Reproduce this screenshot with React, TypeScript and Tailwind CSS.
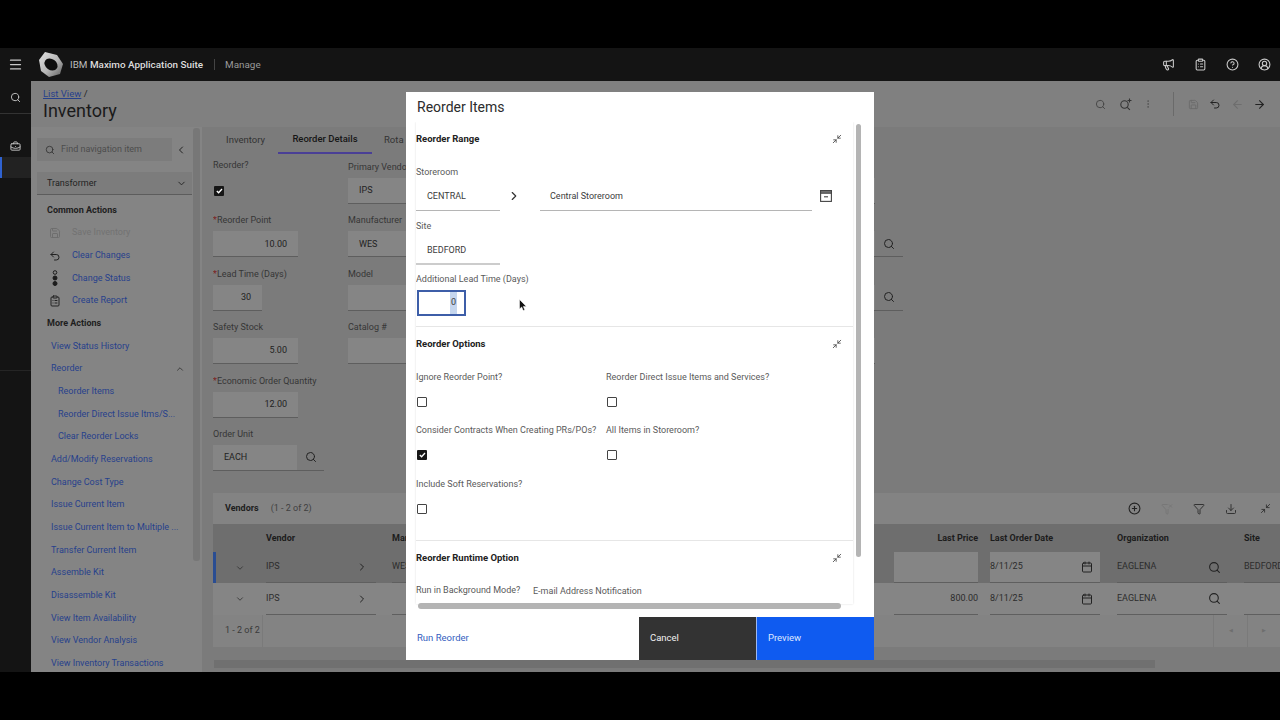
import { ArrowLeft, ArrowRight, BriefcaseBusiness, Calendar, ChevronDown, ChevronLeft, ChevronRight, ChevronUp, CircleHelp, CirclePlus, CircleUserRound, ClipboardList, Download, EllipsisVertical, Filter, FilterX, Megaphone, Menu, Minimize2, Save, Search, Undo2 } from "lucide-react";
import type { ReactNode } from "react";

const moreActions = [
  { t: "View Status History", sub: false },
  { t: "Reorder", sub: false, open: true },
  { t: "Reorder Items", sub: true },
  { t: "Reorder Direct Issue Itms/S...", sub: true },
  { t: "Clear Reorder Locks", sub: true },
  { t: "Add/Modify Reservations", sub: false },
  { t: "Change Cost Type", sub: false },
  { t: "Issue Current Item", sub: false },
  { t: "Issue Current Item to Multiple ...", sub: false },
  { t: "Transfer Current Item", sub: false },
  { t: "Assemble Kit", sub: false },
  { t: "Disassemble Kit", sub: false },
  { t: "View Item Availability", sub: false },
  { t: "View Vendor Analysis", sub: false },
  { t: "View Inventory Transactions", sub: false },
];

function Logo() {
  return (
    <svg width="26" height="27" viewBox="0 0 26 27">
      <defs>
        <linearGradient id="nut" x1="0" y1="0" x2="1" y2="1">
          <stop offset="0" stopColor="#e2e2e2" />
          <stop offset="0.55" stopColor="#b5b5b5" />
          <stop offset="1" stopColor="#5a5a5a" />
        </linearGradient>
      </defs>
      <polygon points="7,1 19,4 25,13 22,23 11,26 3,20 1,9" fill="url(#nut)" />
      <ellipse cx="13" cy="13.5" rx="7" ry="5.5" transform="rotate(35 13 13.5)" fill="#0e0e0e" />
    </svg>
  );
}

function StatusIcon() {
  return (
    <svg width="12" height="16" viewBox="0 0 12 16" fill="none" stroke="#1c1c1c" strokeWidth="1">
      <circle cx="6" cy="2.5" r="1.8" />
      <circle cx="6" cy="8" r="2" fill="#1c1c1c" />
      <circle cx="6" cy="13.5" r="2" fill="#1c1c1c" />
    </svg>
  );
}

function StoreIcon() {
  return (
    <svg width="12" height="12" viewBox="0 0 12 12" fill="none" stroke="#444" strokeWidth="1.1">
      <rect x="0.6" y="0.6" width="10.8" height="10.8" />
      <rect x="0.6" y="0.6" width="10.8" height="2.6" fill="#777" />
      <path d="M4 6.8h4" />
    </svg>
  );
}

function ZoomPlus() {
  return (
    <svg width="14" height="14" viewBox="0 0 14 14" fill="none" stroke="#333" strokeWidth="1.1">
      <circle cx="5.5" cy="7.5" r="3.7" />
      <path d="M8.3 10.3l2.6 2.6M10.5 1.5v4M8.5 3.5h4" />
    </svg>
  );
}

function Check({ on }: { on?: boolean }) {
  return (
    <div className={on ? "w-[10px] h-[10px] rounded-[1px] bg-[#161616] flex items-center justify-center" : "w-[10px] h-[10px] rounded-[1px] border border-[#444444]"}>
      {on && (
        <svg width="7" height="6" viewBox="0 0 7 6" fill="none" stroke="#fff" strokeWidth="1.3">
          <path d="M0.8 3l1.8 1.8L6 1" />
        </svg>
      )}
    </div>
  );
}

function Field({ label, req, width, right, children }: { label: string; req?: boolean; width: string; right?: boolean; children?: ReactNode }) {
  return (
    <div className="h-[53.4px] flex flex-col">
      <div className="h-[13px] text-[9px] leading-[13px] text-[#363636] whitespace-nowrap">
        {req && <span className="text-[#7c1f1f]">*</span>}
        {label}
      </div>
      <div className={`${width} h-[26px] mt-[4px] pt-[1px] bg-[#858585] border-b border-[#5e5e5e] text-[9px] text-[#222222] flex items-center ${right ? "justify-end pr-[11px]" : "pl-[11px]"}`}>
        {children}
      </div>
    </div>
  );
}

function LookupField({ label }: { label: string }) {
  return (
    <div className="h-[53.4px] flex flex-col">
      <div className="h-[13px] text-[9px] leading-[13px] text-[#363636] whitespace-nowrap">{label}</div>
      <div className="w-[555px] h-[26px] mt-[4px] flex border-b border-[#5e5e5e] text-[9px] text-[#222222]">
        <div className="w-[527px] pt-[1px] bg-[#858585] flex items-center pl-[11px]">{label === "Manufacturer" ? "WES" : ""}</div>
        <div className="flex-1 flex items-center justify-center">
          <Search size={12} color="#222" />
        </div>
      </div>
    </div>
  );
}

function ModalLabel({ children }: { children: ReactNode }) {
  return <div className="text-[9px] leading-[13px] text-[#5a5a5a] whitespace-nowrap">{children}</div>;
}

function SectionHead({ title }: { title: string }) {
  return (
    <div className="flex items-center justify-between pr-[11px]">
      <span className="text-[9.5px] leading-[13px] font-bold text-[#222222]">{title}</span>
      <Minimize2 size={10} color="#444" />
    </div>
  );
}

function OptionCell({ label, on }: { label: string; on?: boolean }) {
  return (
    <div className="h-[53.4px]">
      <ModalLabel>{label}</ModalLabel>
      <div className="pl-[1px] mt-[13px]">
        <Check on={on} />
      </div>
    </div>
  );
}

function VendorRow({ dark, blue, price, org }: { dark?: boolean; blue?: boolean; price?: string; org: string }) {
  const line = "border-b border-[#5f5f5f]";
  return (
    <div className={`relative ${dark ? "h-[31px] bg-[#6e6e6e]" : "h-[32px] bg-[#858585]"} grid grid-cols-[53px_126px_502px_96px_127px_127px_60px] items-stretch text-[9px] text-[#2c2c2c]`}>
      {blue && <div className="absolute left-0 top-0 bottom-0 w-[3px] bg-[#2a4d92]" />}
      <div className="flex items-center justify-center">
        <ChevronDown size={10} color="#333" />
      </div>
      <div className={`flex items-center justify-between pr-[8px] mr-[16px] ${line}`}>
        <span>IPS</span>
        <ChevronRight size={12} color="#222" />
      </div>
      <div className="pr-[10px] flex">
        <div className={`w-[100px] flex items-center ${line}`}>{dark ? "WES" : ""}</div>
      </div>
      <div className="pr-[12px]">
        <div className={`h-full bg-[#858585] flex items-center justify-end ${line}`}>{price}</div>
      </div>
      <div className={`mr-[17px] bg-[#858585] flex items-center justify-between pr-[7px] ${line}`}>
        <span>8/11/25</span>
        <Calendar size={12} color="#222" />
      </div>
      <div className={`mr-[17px] flex items-center justify-between pr-[6px] ${line}`}>
        <span>{org}</span>
        <Search size={13} color="#222" />
      </div>
      <div className={`flex items-center whitespace-nowrap ${line}`}>{dark ? "BEDFORD" : ""}</div>
    </div>
  );
}

export default function App() {
  return (
    <div className="relative w-[1280px] h-[720px] overflow-hidden bg-black flex flex-col font-['Roboto',sans-serif]">
      <div className="h-[48px]" />

      <header className="h-[33px] bg-[#141414] flex items-center">
        <div className="w-[31px] flex justify-center">
          <Menu size={15} color="#c8c8c8" />
        </div>
        <div className="ml-[7px]">
          <Logo />
        </div>
        <div className="ml-[6px] pt-[1px] text-[9.9px] text-[#bdbdbd]">
          IBM <span className="font-medium text-[#dddddd]">Maximo Application Suite</span>
        </div>
        <div className="ml-[11px] w-px h-[11px] bg-[#444444]" />
        <div className="ml-[10px] pt-[1px] text-[9.9px] text-[#9a9a9a]">Manage</div>
        <div className="ml-auto flex items-center gap-[19px] pr-[9px]">
          <Megaphone size={13} color="#c8c8c8" />
          <ClipboardList size={13} color="#c8c8c8" />
          <CircleHelp size={13} color="#c8c8c8" />
          <CircleUserRound size={13} color="#c8c8c8" />
        </div>
      </header>

      <div className="h-[591px] flex">
        <aside className="w-[31px] bg-[#141414] flex flex-col">
          <div className="h-[33px] flex items-center justify-center border-b border-[#333333]">
            <Search size={11} color="#c8c8c8" />
          </div>
          <div className="h-[43px] flex items-end justify-center pb-[5px]">
            <BriefcaseBusiness size={11} color="#c8c8c8" />
          </div>
          <div className="h-[21px] bg-[#222222] border-l-2 border-[#2f62d0]" />
          <div className="mt-[192px] border-b border-[#252525]" />
        </aside>

        <div className="flex-1 bg-[#7b7b7b] flex flex-col min-w-0 overflow-hidden">
          <div className="h-[46px] bg-[#808080] flex">
            <div className="pl-[12px] pt-[7px]">
              <div className="text-[9.5px] leading-[12px] text-[#1f1f1f]">
                <span className="text-[#27418c] underline">List View</span> /
              </div>
              <div className="text-[18px] leading-[22px] text-[#1a1a1a]">Inventory</div>
            </div>
            <div className="ml-auto pr-[10px] flex items-center">
              <div className="w-[22px] flex justify-center mr-[4px]">
                <Search size={11} color="#444" />
              </div>
              <div className="w-[22px] flex justify-center">
                <ZoomPlus />
              </div>
              <div className="w-[22px] flex justify-center">
                <EllipsisVertical size={10} color="#555" />
              </div>
              <div className="w-px h-[24px] bg-[#6a6a6a] ml-[14px] mr-[8px]" />
              <div className="w-[22px] flex justify-center">
                <Save size={11} color="#6a6a6a" />
              </div>
              <div className="w-[22px] flex justify-center">
                <Undo2 size={12} color="#222" />
              </div>
              <div className="w-[22px] flex justify-center">
                <ArrowLeft size={13} color="#6e6e6e" />
              </div>
              <div className="w-[22px] flex justify-center">
                <ArrowRight size={13} color="#222" />
              </div>
            </div>
          </div>

          <div className="flex-1 flex min-h-0">
            <nav className="relative w-[171px] bg-[#848484] overflow-hidden shrink-0">
              <div className="absolute left-[162px] top-[1px] w-[7px] h-[433px] rounded-[3px] bg-[#777777]" />
              <div className="flex items-center pl-[6px] pt-[11px]">
                <div className="w-[135px] h-[23px] bg-[#7c7c7c] flex items-center pl-[8px] gap-[6px]">
                  <Search size={10} color="#333" />
                  <span className="pt-[1px] text-[9px] text-[#4d4d4d]">Find navigation item</span>
                </div>
                <ChevronLeft size={12} color="#222" className="ml-[3px]" />
              </div>
              <div className="ml-[6px] mr-[10px] mt-[11px] h-[23px] pt-[1px] bg-[#7c7c7c] border-b border-[#5c5c5c] flex items-center justify-between pl-[10px] pr-[5px] text-[9px] text-[#222222]">
                Transformer
                <ChevronDown size={11} color="#222" />
              </div>
              <div className="pl-[16px] pt-[5px] text-[9px]">
                <div className="h-[21.7px] flex items-center font-bold text-[#1e1e1e]">Common Actions</div>
                <div className="h-[22.68px] flex items-center gap-[11px] pl-[2px] text-[#727272]">
                  <Save size={12} color="#6e6e6e" />
                  Save Inventory
                </div>
                <div className="h-[22.68px] flex items-center gap-[11px] pl-[2px] text-[#27418c]">
                  <Undo2 size={12} color="#222" />
                  Clear Changes
                </div>
                <div className="h-[22.68px] flex items-center gap-[11px] pl-[2px] text-[#27418c]">
                  <StatusIcon />
                  Change Status
                </div>
                <div className="h-[22.68px] flex items-center gap-[11px] pl-[2px] text-[#27418c]">
                  <ClipboardList size={12} color="#222" />
                  Create Report
                </div>
                <div className="h-[22.68px] flex items-center font-bold text-[#1e1e1e]">More Actions</div>
                {moreActions.map((a) => (
                  <div key={a.t} className={a.sub ? "h-[22.68px] flex items-center text-[#27418c] pl-[11px] whitespace-nowrap" : "h-[22.68px] flex items-center justify-between pr-[17px] text-[#27418c] pl-[4px] whitespace-nowrap"}>
                    {a.t}
                    {a.open && <ChevronUp size={10} color="#333" />}
                  </div>
                ))}
              </div>
            </nav>

            <div className="w-[11px] shrink-0" />

            <main className="flex-1 min-w-0 overflow-hidden">
              <div className="h-[27px] flex text-[9.5px] text-[#333333]">
                <div className="w-[65px] flex items-center justify-center">Inventory</div>
                <div className="w-[94px] flex items-center justify-center font-medium text-[#161616] border-b-2 border-[#4a3f96]">Reorder Details</div>
                <div className="w-[34px] ml-[12px] overflow-hidden whitespace-nowrap flex items-center">Rota</div>
              </div>

              <div className="flex pt-[5px] h-[339px]">
                <div className="w-[135px] shrink-0">
                  <div className="h-[55.4px]">
                    <div className="text-[9px] leading-[13px] text-[#363636]">Reorder?</div>
                    <div className="mt-[14px] pl-[1px]">
                      <Check on />
                    </div>
                  </div>
                  <Field label="Reorder Point" req width="w-[85px]" right>10.00</Field>
                  <Field label="Lead Time (Days)" req width="w-[49px]" right>30</Field>
                  <Field label="Safety Stock" width="w-[85px]" right>5.00</Field>
                  <Field label="Economic Order Quantity" req width="w-[85px]" right>12.00</Field>
                  <div className="h-[53.4px] flex flex-col">
                    <div className="h-[13px] text-[9px] leading-[13px] text-[#363636]">Order Unit</div>
                    <div className="flex h-[26px] mt-[4px] border-b border-[#5e5e5e] w-[111px] text-[9px] text-[#222222]">
                      <div className="w-[84px] pt-[1px] bg-[#858585] flex items-center pl-[11px]">EACH</div>
                      <div className="flex-1 flex items-center justify-center">
                        <Search size={12} color="#222" />
                      </div>
                    </div>
                  </div>
                </div>
                <div className="w-[555px] shrink-0">
                  <div className="pt-[2px] h-[55.4px]">
                    <div className="h-[13px] text-[9px] leading-[13px] text-[#363636] whitespace-nowrap">Primary Vendor</div>
                    <div className="w-[527px] h-[26px] mt-[4px] pt-[1px] bg-[#858585] border-b border-[#5e5e5e] text-[9px] text-[#222222] flex items-center pl-[11px]">IPS</div>
                  </div>
                  <LookupField label="Manufacturer" />
                  <LookupField label="Model" />
                  <Field label="Catalog #" width="w-[527px]" />
                </div>
              </div>
            </main>
          </div>
        </div>
      </div>

      <div className="absolute left-[213px] right-0 top-[493px] h-[154px] bg-[#838383]">
        <div className="h-[31px] flex items-center pl-[12px] text-[9px] text-[#1e1e1e]">
          <span className="font-bold">Vendors</span>
          <span className="ml-[12px] text-[#3f3f3f]">(1 - 2 of 2)</span>
          <div className="ml-auto flex items-center gap-[20px] pr-[9px]">
            <CirclePlus size={13} color="#222" />
            <FilterX size={12} color="#777" />
            <Filter size={12} color="#333" />
            <Download size={12} color="#333" />
            <Minimize2 size={11} color="#333" className="ml-[3px]" />
          </div>
        </div>
        <div className="h-[28px] pt-[1px] bg-[#6e6e6e] grid grid-cols-[53px_126px_502px_96px_127px_127px_60px] items-center text-[9px] font-bold text-[#1c1c1c]">
          <div />
          <div>Vendor</div>
          <div>Manufacturer</div>
          <div className="text-right pr-[12px]">Last Price</div>
          <div>Last Order Date</div>
          <div>Organization</div>
          <div>Site</div>
        </div>
        <VendorRow dark blue org="EAGLENA" />
        <VendorRow price="800.00" org="EAGLENA" />
        <div className="h-[32px] flex items-stretch text-[9px] text-[#3a3a3a]">
          <div className="w-[50px] pl-[12px] flex items-center border-r border-[#7a7a7a]">1 - 2 of 2</div>
          <div className="ml-auto w-[34px] flex items-center justify-center border-l border-[#7a7a7a]">
            <span className="text-[5px] text-[#6e6e6e]">◀</span>
          </div>
          <div className="w-[33px] flex items-center justify-center border-l border-[#7a7a7a]">
            <span className="text-[5px] text-[#6e6e6e]">▶</span>
          </div>
        </div>
      </div>

      <div className="absolute left-[214px] top-[660px] w-[941px] h-[8px] bg-[#707070]" />

      {/* dialog */}
      <div className="absolute left-[406px] top-[92px] w-[468px] h-[568px] bg-white flex flex-col">
        <div className="h-[30px] flex items-center pl-[11px] text-[14px] text-[#2c2c2c]">Reorder Items</div>
        <div className="relative h-[490px] pl-[10px] overflow-hidden">
          <div className="w-[437px] h-[482px] shadow-[0_0_2px_#dddddd] overflow-hidden">
            <div className="pt-[10px] h-[205px] border-b border-[#e6e6e6]">
              <SectionHead title="Reorder Range" />
              <div className="mt-[21px]">
                <ModalLabel>Storeroom</ModalLabel>
                <div className="flex items-center h-[27px] mt-[5px] text-[9px] text-[#3c3c3c]">
                  <div className="w-[84px] h-full pl-[11px] flex items-center border-b border-[#b5b5b5]">CENTRAL</div>
                  <div className="w-[28px] pb-[4px] flex justify-center">
                    <ChevronRight size={14} color="#333" />
                  </div>
                  <div className="w-[272px] ml-[12px] h-full pl-[10px] flex items-center border-b border-[#b5b5b5]">Central Storeroom</div>
                  <div className="ml-[8px] pb-[4px]">
                    <StoreIcon />
                  </div>
                </div>
              </div>
              <div className="mt-[9px]">
                <ModalLabel>Site</ModalLabel>
                <div className="w-[84px] h-[27px] mt-[5px] pl-[11px] flex items-center border-b-2 border-[#cccccc] text-[9px] text-[#3c3c3c]">BEDFORD</div>
              </div>
              <div className="mt-[8px]">
                <ModalLabel>Additional Lead Time (Days)</ModalLabel>
                <div className="ml-[1px] w-[49px] h-[26px] mt-[4px] border-2 border-[#3d5ea8] flex items-center justify-end pr-[7px] text-[9px] text-[#3c3c3c]">
                  <span className="bg-[#c5d6ee] px-[1px] h-full flex items-center">0</span>
                </div>
              </div>
            </div>

            <div className="pt-[10px] h-[214px] border-b border-[#e6e6e6]">
              <SectionHead title="Reorder Options" />
              <div className="grid grid-cols-[190px_1fr] mt-[21px]">
                <OptionCell label="Ignore Reorder Point?" />
                <OptionCell label="Reorder Direct Issue Items and Services?" />
                <OptionCell label="Consider Contracts When Creating PRs/POs?" on />
                <OptionCell label="All Items in Storeroom?" />
                <OptionCell label="Include Soft Reservations?" />
              </div>
            </div>

            <div className="pt-[10px]">
              <SectionHead title="Reorder Runtime Option" />
              <div className="flex mt-[20px]">
                <div className="w-[117px]">
                  <ModalLabel>Run in Background Mode?</ModalLabel>
                </div>
                <div className="pt-[1px]">
                  <ModalLabel>E-mail Address Notification</ModalLabel>
                </div>
              </div>
            </div>
          </div>

          <div className="absolute left-[450px] top-[2px] w-[5px] h-[433px] rounded bg-[#b4b4b4]" />
          <div className="absolute left-[12px] top-[481px] w-[423px] h-[6px] rounded bg-[#b4b4b4]" />
        </div>

        <div className="mt-auto h-[43px] flex text-[9.5px]">
          <div className="flex-1 pl-[11px] flex items-center text-[#3560c0]">Run Reorder</div>
          <div className="w-[117px] bg-[#333333] text-[#f0f0f0] flex items-center pl-[11px]">Cancel</div>
          <div className="w-px bg-[#9db8f0]" />
          <div className="w-[117px] bg-[#0f5bf0] text-[#dfe8ff] flex items-center pl-[11px]">Preview</div>
        </div>
      </div>

      {/* mouse pointer */}
      <svg className="absolute left-[519px] top-[299px]" width="8" height="13" viewBox="0 0 8 13">
        <path d="M0.5 0.5v9.5l2.2-2 1.5 3.6 1.6-.7-1.5-3.5h3z" fill="#111" stroke="#fff" strokeWidth="0.5" />
      </svg>
    </div>
  );
}
